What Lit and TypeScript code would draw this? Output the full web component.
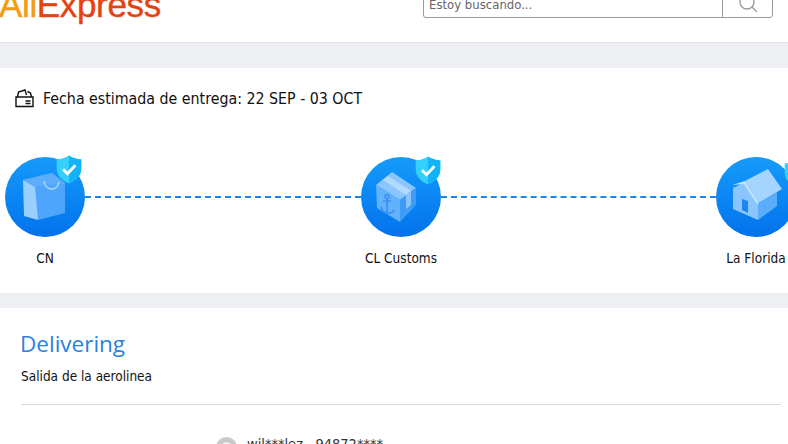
import { LitElement, html, css, svg } from "lit";
import { customElement } from "lit/decorators.js";
import { styleMap } from "lit/directives/style-map.js";

const shield = svg`<path d="M13 0.5 C16 2.5 20 4 25.5 4.5 V14 C25.5 21 20 26 13 29 C6 26 0.5 21 0.5 14 V4.5 C6 4 10 2.5 13 0.5 Z" fill="#34cffc"/><path d="M13 0.5 C16 2.5 20 4 25.5 4.5 V14 C25.5 21 20 26 13 29 Z" fill="#12b4f6"/><path d="M7 14.5 L11.5 19 L19.5 10.5" fill="none" stroke="#fff" stroke-width="3"/>`;

const bag = svg`
  <path d="M18 23 L47 16 L60 26 L60 56 L33 63 Z" fill="#4fa5fb"/>
  <path d="M18 23 L30 30 L33 63 L19 59 Z" fill="#9ad0fd"/>
  <path d="M18 23 L47 16 L60 26 L30 30 Z" fill="#5dadfb"/>
  <path d="M39 24 C40 34 52 35 54 25" fill="none" stroke="#b4dcfe" stroke-width="1.3"/>`;

const box = svg`
  <path d="M31 15 L55 31 L39 43 L15 28 Z" fill="#8ac6fd"/>
  <path d="M15 28 L39 43 V65 L16 51 Z" fill="#62b1fb"/>
  <path d="M39 43 L55 31 V48 L39 65 Z" fill="#3f9bf8"/>
  <path d="M22 23 L45 38 L50 34 L27 19 Z" fill="#b0dbfe"/>
  <path d="M45 38 L50 34 V48 L45 52 Z" fill="#8ac6fd"/>
  <path d="M26 41 V56 M20 50 C21 57 31 58 33 53 M22 44 H30" fill="none" stroke="#3b8ff0" stroke-width="1.7"/>
  <circle cx="26" cy="39.5" r="2" fill="none" stroke="#3b8ff0" stroke-width="1.3"/>`;

const house = svg`
  <path d="M29 24 L52 12 L66 32 L43 46 Z" fill="#a4d5fe"/>
  <path d="M17 31 L29 25 L42 44 V63 L17 52 Z" fill="#8ac6fd"/>
  <path d="M42 46 L61 35 V49 L42 63 Z" fill="#5aadfb"/>
  <path d="M16 28 L29 24 L43 46 L41 47 L28 27 Z" fill="#c4e4fe"/>
  <path d="M26 42 L32 44 V56 L26 53 Z" fill="#1f84ee"/>`;

@customElement("app-root")
export class AppRoot extends LitElement {
  static styles = css`
    :host {
      display: block;
      width: 788px;
      height: 444px;
      overflow: hidden;
      background: #fff;
      font-family: "DejaVu Sans Condensed", "DejaVu Sans", sans-serif;
      color: #111;
    }
    .header {
      height: 42px;
      border-bottom: 1px solid #e4e5e8;
      display: flex;
      justify-content: space-between;
      align-items: flex-start;
      padding: 0 15px 0 0;
      overflow: hidden;
    }
    .logo {
      font-family: "Liberation Sans", sans-serif;
      font-size: 35px;
      line-height: 42px;
      margin: -16px 0 0 -1px;
      letter-spacing: -0.35px;
      color: #e5420f;
      white-space: nowrap;
      -webkit-text-stroke: 0.4px currentColor;
    }
    .logo b {
      font-weight: 400;
      color: #f39c12;
    }
    .search {
      width: 350px;
      height: 30px;
      margin-top: -12px;
      box-sizing: border-box;
      border: 1px solid #9a9a9a;
      border-radius: 3px;
      display: flex;
    }
    .search .ph {
      flex: 1;
      font-size: 13px;
      line-height: 14px;
      color: #666;
      padding: 9px 0 0 5px;
    }
    .search .btn {
      width: 50px;
      border-left: 1px solid #9a9a9a;
      display: flex;
      justify-content: center;
      padding-top: 4px;
      box-sizing: border-box;
    }
    .gap1 { height: 25px; background: #eff0f3; }
    .gap2 { height: 15px; background: #eff0f3; }
    .track { height: 225px; box-sizing: border-box; overflow: hidden; }
    .eta {
      display: flex;
      align-items: center;
      gap: 9px;
      height: 22px;
      margin: 19px 0 0 15px;
      font-size: 15.8px;
    }
    .steps {
      display: flex;
      align-items: flex-start;
      margin: 48px 0 0 5px;
      width: 800px;
    }
    .step {
      width: 80px;
      flex: none;
      display: flex;
      flex-direction: column;
      align-items: center;
      position: relative;
    }
    .icon { width: 80px; height: 80px; display: block; }
    .shield {
      position: absolute;
      width: 26px;
      height: 29px;
    }
    .label {
      margin-top: 12px;
      font-size: 13.5px;
      line-height: 18px;
      white-space: nowrap;
    }
    .link {
      flex: none;
      height: 0;
      margin-top: 39px;
      border-top: 2px dashed #1c86ea;
    }
    .l1 { width: 276px; }
    .l2 { width: 275px; }
    .detail { padding: 20px 7px 0 21px; }
    h2 {
      margin: 0 0 0 -1px;
      font-family: "Open Sans", sans-serif;
      font-weight: 400;
      font-size: 22.5px;
      line-height: 32px;
      color: #2a82e0;
    }
    .sub { margin-top: 7px; font-size: 13.5px; line-height: 18px; }
    hr {
      margin: 19px 0 0;
      border: 0;
      border-top: 1px solid #d9d9d9;
    }
    .user {
      display: flex;
      align-items: flex-start;
      gap: 10px;
      margin: 32px 0 0 195px;
      font-size: 14.5px;
      line-height: 14px;
      color: #333;
    }
    .avatar {
      width: 21px;
      height: 21px;
      box-sizing: border-box;
      border: 5px solid #c9c9c9;
      border-radius: 50%;
      background: #eee;
      flex: none;
    }
  `;

  private step(icon: unknown, label: string, id: string, sx: number, sy: number) {
    return html`<div class="step">
      <svg class="icon" viewBox="0 0 80 80">
        <defs>
          <linearGradient id=${id} x1="0" y1="0" x2="0" y2="1">
            <stop offset="0" stop-color="#159bfb" />
            <stop offset="1" stop-color="#0272ec" />
          </linearGradient>
        </defs>
        <circle cx="40" cy="40" r="40" fill="url(#${id})" />
        ${icon}
      </svg>
      <svg class="shield" style=${styleMap({ left: `${sx}px`, top: `${sy}px` })} viewBox="0 0 26 29.5">${shield}</svg>
      <div class="label">${label}</div>
    </div>`;
  }

  render() {
    return html`
      <div class="header">
        <div class="logo"><b>Ali</b>Express</div>
        <div class="search">
          <div class="ph">Estoy buscando...</div>
          <div class="btn">
            <svg width="22" height="22" viewBox="0 0 22 22" fill="none" stroke="#999" stroke-width="1.3">
              <circle cx="10" cy="9" r="7" />
              <path d="M15 14 L20 19" />
            </svg>
          </div>
        </div>
      </div>
      <div class="gap1"></div>
      <div class="track">
        <div class="eta">
          <svg width="19" height="19" viewBox="0 0 19 19" fill="none" stroke="#111" stroke-width="1.4">
            <path d="M1 8 H18 V17.5 H1 Z" />
            <path d="M2.5 8 L3.5 3 L10 1 L11.5 6 M12.5 2.5 L15.5 4 L16.5 8" />
            <path d="M10.5 12 H15.5 M10.5 14.5 H15.5" />
          </svg>
          <span>Fecha estimada de entrega: 22 SEP - 03 OCT</span>
        </div>
        <div class="steps">
          ${this.step(bag, "CN", "g1", 51, -2)}
          <div class="link l1"></div>
          ${this.step(box, "CL Customs", "g2", 54, -1)}
          <div class="link l2"></div>
          ${this.step(house, "La Florida", "g3", 68, 2)}
        </div>
      </div>
      <div class="gap2"></div>
      <div class="detail">
        <h2>Delivering</h2>
        <div class="sub">Salida de la aerolinea</div>
        <hr />
        <div class="user">
          <div class="avatar"></div>
          <span>wil***lez , 94872****</span>
        </div>
      </div>
    `;
  }
}
